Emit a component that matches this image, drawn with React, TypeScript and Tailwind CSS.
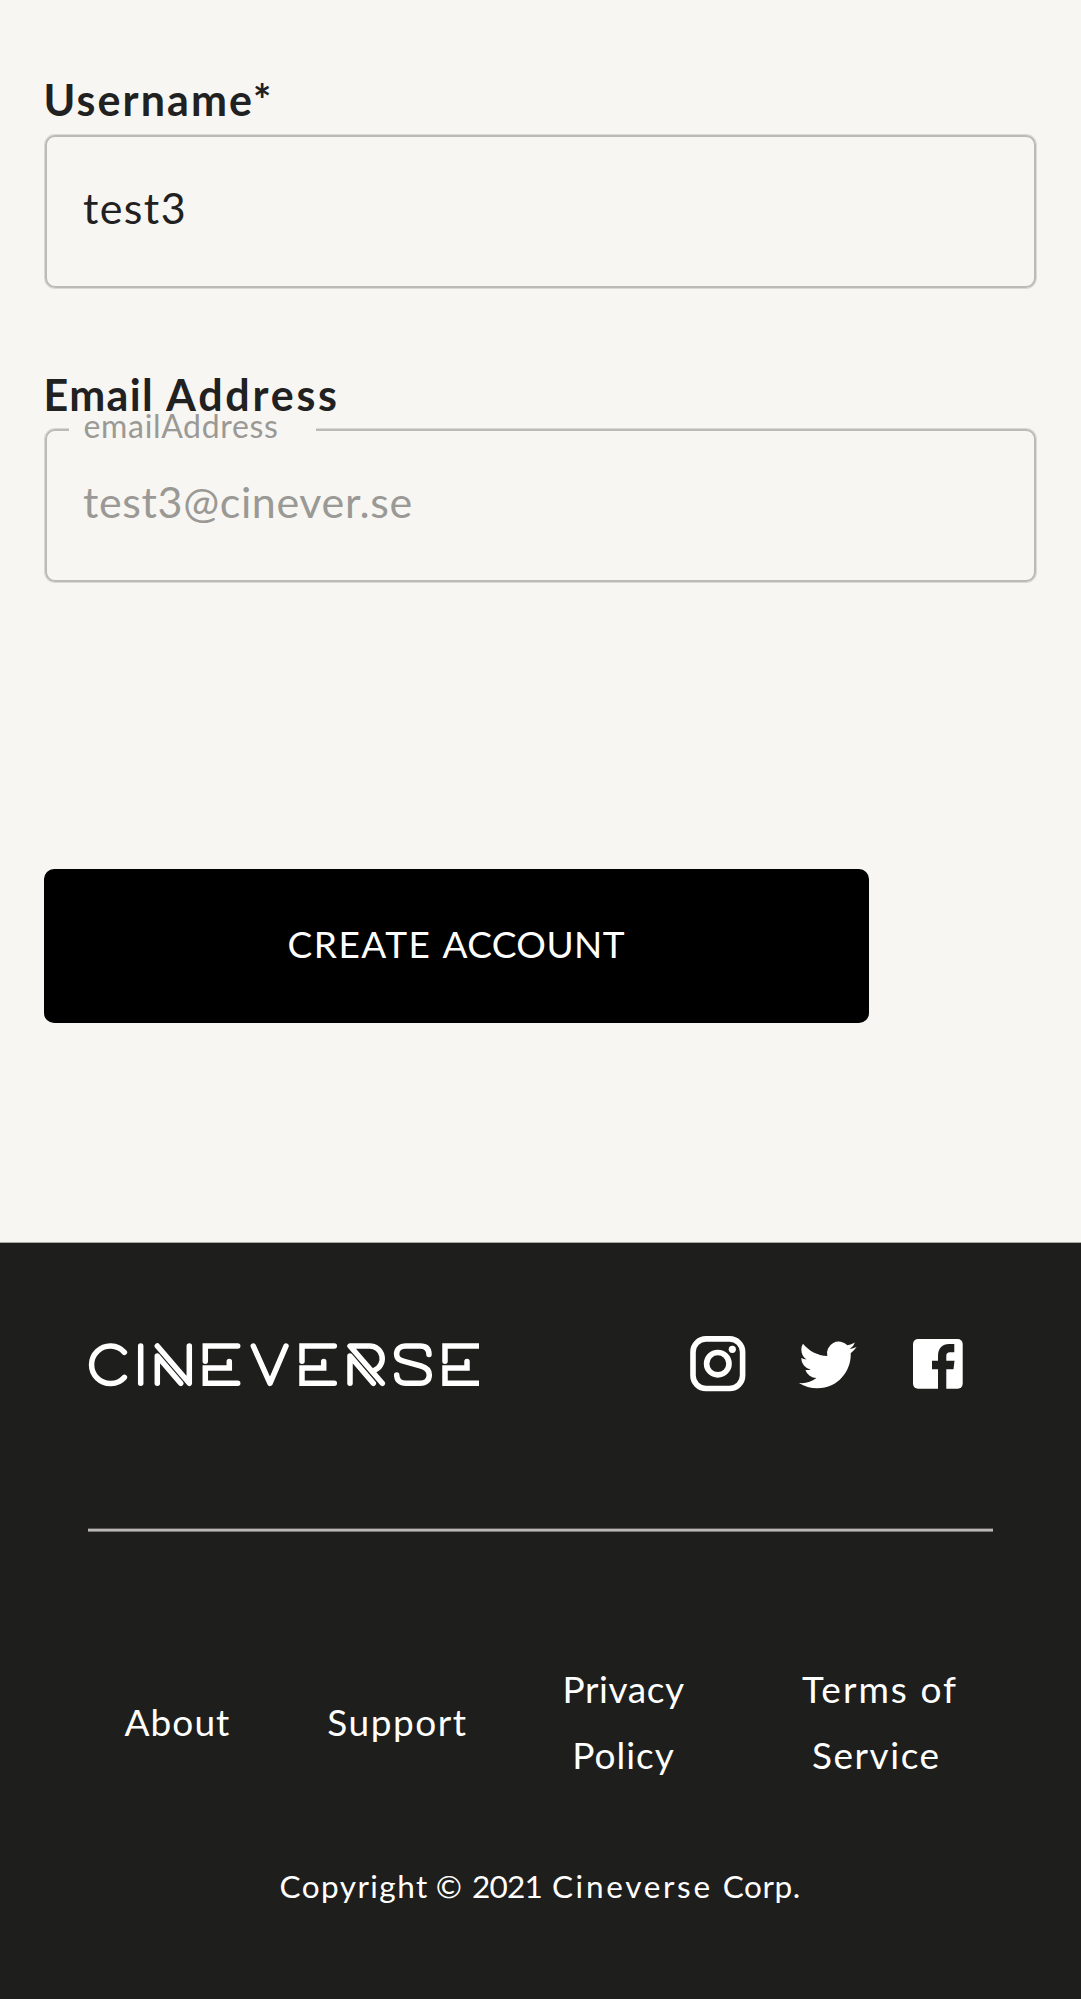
import type { ReactNode } from 'react';

function FieldLabel({ children }: { children: ReactNode }) {
  return (
    <div className="h-[53px] leading-[53px] text-[43px] font-bold tracking-[2.07px] text-[#212121] whitespace-nowrap">
      {children}
    </div>
  );
}

function Outline({ children }: { children: ReactNode }) {
  return (
    <div className="relative mt-[9px] ml-[1.5px] flex h-[153px] w-[991px] items-center rounded-[10px] border-2 border-[#bbbab5] pb-[7px] pl-[36px] shadow-[0_0_0_1px_#dad9d5]">
      {children}
    </div>
  );
}

function Logo() {
  return (
    <svg width="391" height="46" viewBox="88 1342 391 46" fill="none" stroke="#fff" strokeWidth="5.5" strokeLinecap="round" className="mt-[7px] shrink-0">
      <path d="M124.4 1352.3A18.8 18.8 0 1 0 124.4 1377.3" />
      <path d="M140.7 1346V1383.3" />
      <path d="M157.3 1383.3V1356L180.7 1383.3" strokeLinejoin="round" />
      <path d="M157.3 1346L189.3 1383.3V1346" strokeLinejoin="round" />
      <path d="M237.7 1346H205.3V1361.2M229.3 1361.5V1368H205.3V1383.3H237.7" />
      <path d="M253.3 1346L270 1383.3L286 1346" strokeLinejoin="round" />
      <path d="M334.3 1346H302V1361.2M323.7 1361.5V1368H302V1383.3H334.3" />
      <path d="M350 1383.3V1356L373.3 1383.3" strokeLinejoin="round" />
      <path d="M382.3 1383.3L350 1346H369.5A12.6 12.6 0 0 1 375 1370" strokeLinejoin="round" />
      <path d="M429 1354.5C429 1349 426 1346 420 1346H406C400 1346 396.6 1349.5 396.6 1354C396.6 1359 400 1360.4 405 1361.7L421 1366C426 1367.5 429.3 1370 429.3 1375C429.3 1380 426 1383.3 420 1383.3H406C400 1383.3 396.7 1380 396.7 1375" />
      <path d="M483 1346H445V1361.2M467 1361.5V1368H445V1383.3H483" />
    </svg>
  );
}

function Instagram() {
  return (
    <svg width="58" height="60" viewBox="0 0 58 60" fill="none" stroke="#fff" className="ml-[210px] shrink-0">
      <rect x="4" y="3.9" width="49.6" height="49.6" rx="13" strokeWidth="5.6" />
      <circle cx="28.8" cy="28.7" r="11.2" strokeWidth="5.6" />
      <circle cx="43.3" cy="14.3" r="3.6" fill="#fff" stroke="none" />
    </svg>
  );
}

function Twitter() {
  return (
    <svg width="58" height="60" viewBox="0 0 58 60" fill="#fff" className="ml-[52px] shrink-0">
      <path
        transform="translate(0 1.1) scale(2.4)"
        d="M23.953 4.57a10 10 0 01-2.825.775 4.958 4.958 0 002.163-2.723c-.951.555-2.005.959-3.127 1.184a4.92 4.92 0 00-8.384 4.482C7.69 8.095 4.067 6.13 1.64 3.162a4.822 4.822 0 00-.666 2.475c0 1.71.87 3.213 2.188 4.096a4.904 4.904 0 01-2.228-.616v.06a4.923 4.923 0 003.946 4.827 4.996 4.996 0 01-2.212.085 4.936 4.936 0 004.604 3.417 9.867 9.867 0 01-6.102 2.105c-.39 0-.779-.023-1.17-.067a13.995 13.995 0 007.557 2.209c9.053 0 13.998-7.496 13.998-13.985 0-.21 0-.42-.015-.63A9.935 9.935 0 0024 4.59z"
      />
    </svg>
  );
}

function Facebook() {
  return (
    <svg width="50" height="60" viewBox="0 0 50 60" className="ml-[56px] shrink-0">
      <rect x="0" y="4" width="49.7" height="49.7" rx="5" fill="#fff" />
      <path
        fill="#1e1e1c"
        d="M25 54V34.3H19V25.7H25V21C25 13 29.5 9 36 9H41.3V17.3H37C34.5 17.3 33.3 18.5 33.3 21V25.7H41.5L40.5 34.3H33.3V54Z"
      />
    </svg>
  );
}

export default function App() {
  return (
    <div className="flex h-[1999px] w-[1081px] flex-col overflow-hidden bg-[#f7f6f2] font-['Lato',sans-serif]">
      <main className="h-[1242px] shrink-0 pt-[73px] pl-[43.5px]">
        <FieldLabel>Username*</FieldLabel>
        <Outline>
          <span className="text-[43px] tracking-[1.4px] text-[#212121]">test3</span>
        </Outline>

        <div className="mt-[80px]">
          <FieldLabel>
            <span className="tracking-[1.4px]">Email </span>
            <span className="tracking-[2.75px]">Address</span>
          </FieldLabel>
        </div>
        <div className="-mt-[1px]">
          <Outline>
            <div className="absolute -top-[4px] left-[22px] h-[8px] w-[247px] bg-[#f7f6f2]" />
            <span className="absolute -top-[25px] left-[36.5px] text-[32px] leading-[40px] tracking-[0.67px] text-[#9a9995]">
              emailAddress
            </span>
            <span className="text-[43px] tracking-[0.63px] text-[#9a9995]">test3@cinever.se</span>
          </Outline>
        </div>

        <button className="mt-[286.5px] ml-[0.5px] flex h-[154px] w-[825px] items-center rounded-[10px] bg-black pb-[4px] pl-[243.5px] text-[37px] whitespace-pre text-white">
          <span className="tracking-[1.5px]">CREATE </span>
          <span className="tracking-[0.4px]">ACCOUNT</span>
        </button>
      </main>

      <footer className="flex-1 border-t border-[#a5a5a2] bg-[#1e1e1c] pt-[92px] text-white">
        <div className="flex h-[60px] items-start pl-[88px]">
          <Logo />
          <Instagram />
          <Twitter />
          <Facebook />
        </div>

        <div className="mt-[133px] ml-[88px] h-[4px] w-[905px] border-t border-b border-t-[#575654] border-b-[#7b7977] bg-[#bbb7b5]" />

        <nav className="mt-[124px] flex h-[132px] items-center text-center text-[37px] leading-[66px] whitespace-nowrap">
          <a className="ml-[124.5px] w-[106px] tracking-[1.05px]">About</a>
          <a className="ml-[96.5px] w-[141px] tracking-[1.54px]">Support</a>
          <a className="ml-[94.5px] flex w-[122px] flex-col items-center">
            <span className="tracking-[0.59px]">Privacy</span>
            <span className="tracking-[1px]">Policy</span>
          </a>
          <a className="ml-[117.5px] flex w-[156px] flex-col items-start">
            <span className="tracking-[2.02px]">Terms of</span>
            <span className="ml-[10px] tracking-[1.54px]">Service</span>
          </a>
        </nav>

        <p className="mt-[65px] flex gap-[10px] pl-[279.5px] text-[31.5px] leading-[66px]">
          <span className="tracking-[1.46px]">Copyright</span>
          <span className="-ml-[3px]">©</span>
          <span className="tracking-[-0.8px]">2021</span>
          <span className="tracking-[2.7px]">Cineverse</span>
          <span className="tracking-[0.57px]">Corp.</span>
        </p>
      </footer>
    </div>
  );
}
